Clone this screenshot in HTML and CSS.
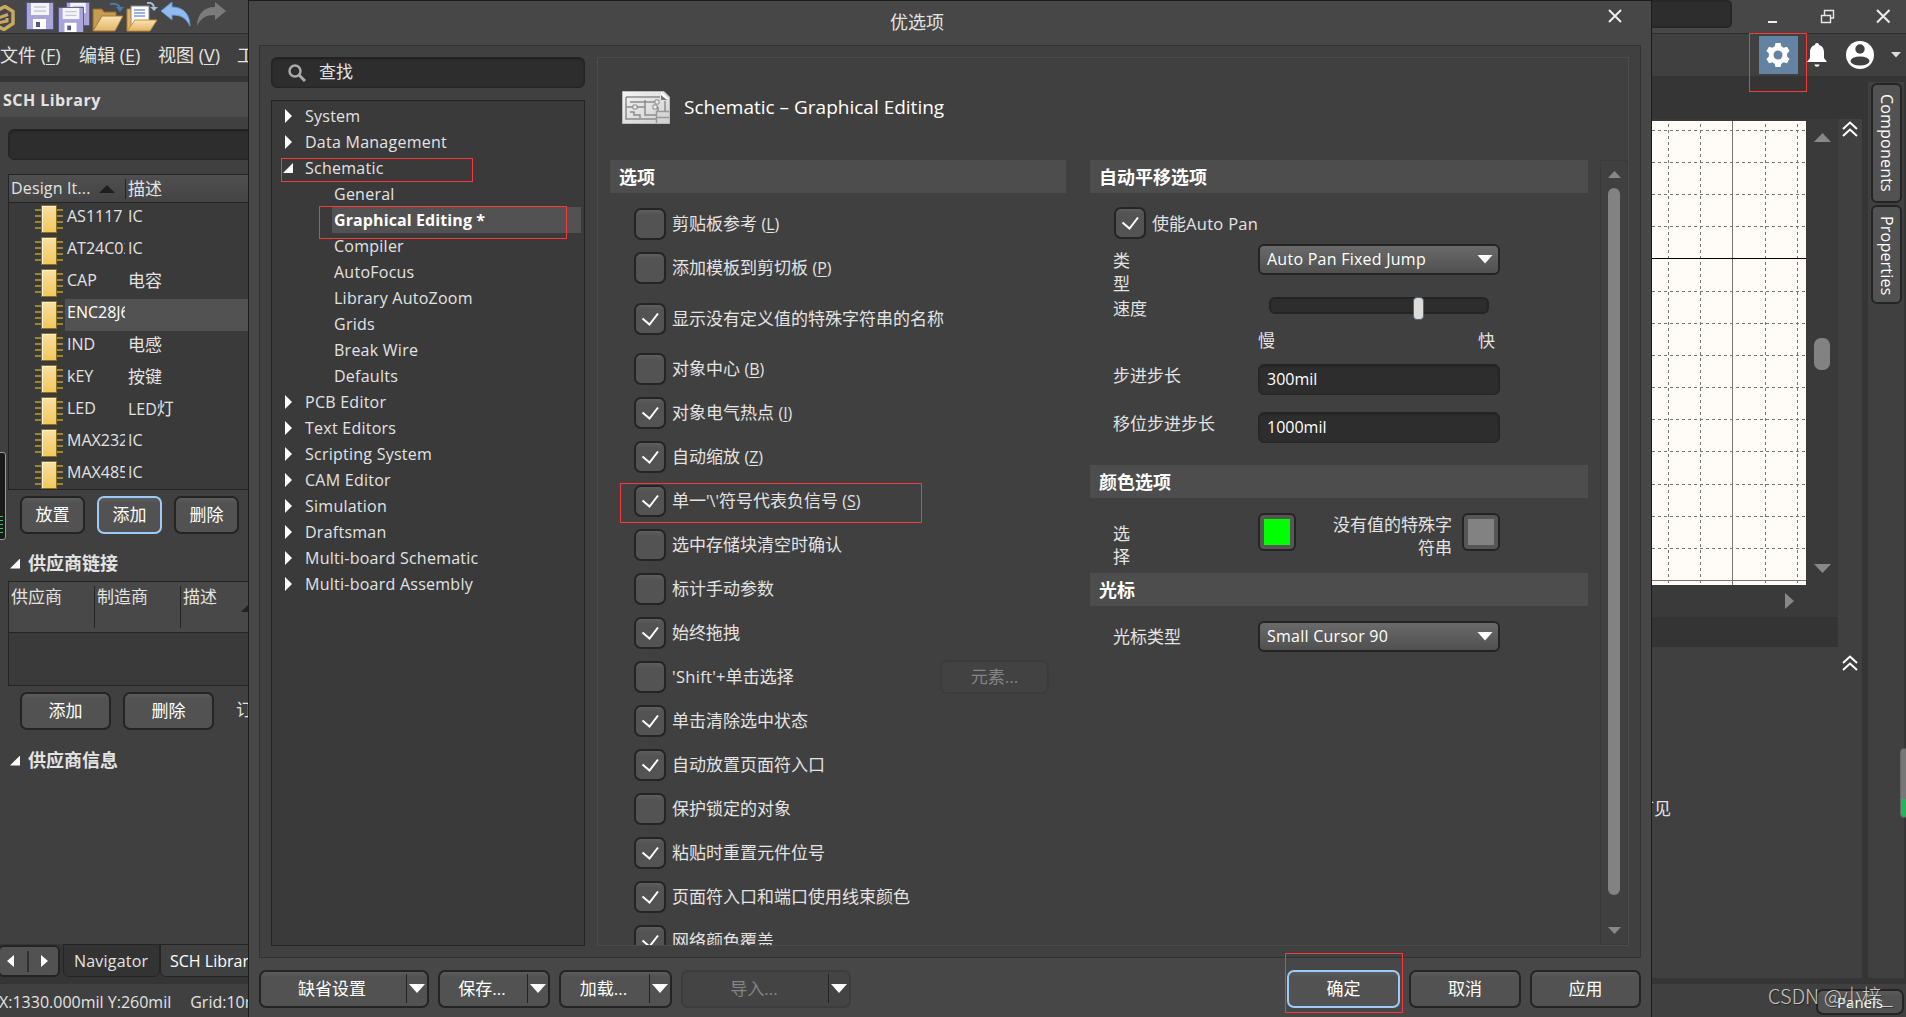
FILE: index.html
```html
<!DOCTYPE html>
<html lang="zh-CN">
<head>
    <meta charset="UTF-8">
    <meta name="viewport" content="width=device-width, initial-scale=1.0">
    <title>优选项</title>
    <link rel="stylesheet" href="styles.css">
</head>
<body>
    <!-- Shared icons -->
    <svg class="defs" width="0" height="0">
        <defs>
            <linearGradient id="chipFill" x1="0" y1="0" x2="0" y2="1">
                <stop offset="0" stop-color="#f8e0a0"/>
                <stop offset="1" stop-color="#f2c75c"/>
            </linearGradient>
            <linearGradient id="folderFill" x1="0" y1="0" x2="0" y2="1">
                <stop offset="0" stop-color="#fbe3b4"/>
                <stop offset="1" stop-color="#e3b566"/>
            </linearGradient>
            <linearGradient id="pageFill" x1="0" y1="0" x2="1" y2="1">
                <stop offset="0" stop-color="#f4f4f4"/>
                <stop offset="1" stop-color="#cfcfcf"/>
            </linearGradient>
            <symbol id="chip" viewBox="0 0 28 28">
                <path d="M0 5h28M0 11h28M0 17h28M0 23h28" stroke="#a08530" stroke-width="2"/>
                <rect x="6.5" y="0.5" width="15" height="27" fill="url(#chipFill)" stroke="#8a6f22"/>
                <path d="M7.5 27V1.500h13" fill="none" stroke="#fdf3d4"/>
            </symbol>
            <symbol id="check" viewBox="0 0 32 32">
                <path d="M8.500 15.500l7 6L24 10.500" fill="none" stroke="#fff" stroke-width="2"/>
            </symbol>
            <symbol id="floppy" viewBox="0 0 28 28">
                <rect x="0.500" y="0.500" width="27" height="27" fill="#a9a5d8" stroke="#55558c"/>
                <rect x="5" y="1" width="18" height="12" fill="#f4f4fb"/>
                <path d="M8 5h12M8 9h12" stroke="#c4c8d4" stroke-width="1.500"/>
                <rect x="7" y="17" width="13" height="10" fill="#fff"/>
                <rect x="10" y="20" width="4" height="5" fill="#55558c"/>
            </symbol>
            <symbol id="chevrons" viewBox="0 0 16 16">
                <path d="M1 8l7-6.500L15 8M1 15l7-6.500L15 15" fill="none" stroke="#fff" stroke-width="2"/>
            </symbol>
        </defs>
    </svg>

    <div class="screen">
        <!-- Left side: toolbar, menu, SCH Library panel -->
        <div class="left-side">
            <div class="toolbar">
                <svg class="logo" width="15" height="26" viewBox="0 0 15 26">
                    <path d="M-4 6L5 1.500l8 5v12l-9 6-8-4" fill="none" stroke="#c9a960" stroke-width="3.500"/>
                    <path d="M-2 13L8 9.500M-2 18l9-2v-3" fill="none" stroke="#c9a960" stroke-width="3"/>
                </svg>
                <svg width="28" height="28"><use href="#floppy"/></svg>
                <svg width="32" height="30" viewBox="0 0 32 30">
                    <use href="#floppy" x="8" y="0" width="24" height="24"/>
                    <use href="#floppy" x="0" y="5" width="26" height="26"/>
                </svg>
                <svg width="32" height="30" viewBox="0 0 32 30">
                    <path d="M1 29V7h9l2 3h12v5" fill="#c79b50" stroke="#8d6c30"/>
                    <path d="M1 29l9-15h21l-8 15z" fill="url(#folderFill)" stroke="#a47c3a"/>
                    <path d="M18 2c6-1 9 1 10 4" fill="none" stroke="#4a7ba5" stroke-width="2"/>
                    <path d="M24 5h8l-4 5z" fill="#4a7ba5"/>
                </svg>
                <svg width="32" height="30" viewBox="0 0 32 30">
                    <path d="M1 29V7h8v22" fill="#e9b158" stroke="#b17f2e"/>
                    <rect x="5" y="4" width="18" height="20" fill="#fff" stroke="#888"/>
                    <path d="M8 8h11M8 11h11M8 14h11" stroke="#7f9ad0" stroke-width="1.500"/>
                    <path d="M1 29l8-11h22l-7 11z" fill="url(#folderFill)" stroke="#c18a35"/>
                    <path d="M21 1c5-1 7 2 7 5" fill="none" stroke="#9fc0d8" stroke-width="2"/>
                    <path d="M24 5h8l-4 4z" fill="#9fc0d8"/>
                </svg>
                <svg class="history" width="31" height="26" viewBox="0 0 31 26">
                    <path d="M0 9L11 0v5c12 0 18 8 18 19C25 16 20 13 11 13v5z" fill="#8fbbf0" stroke="#6a94d6"/>
                </svg>
                <svg class="history" width="31" height="26" viewBox="0 0 31 26">
                    <path d="M30 9L19 0v5C7 5 1 13 1 24c4-8 9-11 18-11v5z" fill="#7b7b7b"/>
                </svg>
            </div>
            <div class="menu">
                <span>文件 (<u>F</u>)</span><span>编辑 (<u>E</u>)</span><span>视图 (<u>V</u>)</span><span>工具</span>
            </div>
            <div class="panel-title en">SCH Library</div>
            <div class="library">
                <div class="field lib-search"></div>
                <div class="table">
                    <div class="table-head">
                        <span class="en col-name">Design It...</span>
                        <svg width="16" height="9"><path d="M0 9L8 1l8 8z" fill="#1f1f1f"/></svg>
                        <span class="col-desc">描述</span>
                    </div>
                    <div class="lib-row"><svg width="28" height="28"><use href="#chip"/></svg><span class="name">AS1117</span><span>IC</span></div>
                    <div class="lib-row"><svg width="28" height="28"><use href="#chip"/></svg><span class="name">AT24C02</span><span>IC</span></div>
                    <div class="lib-row"><svg width="28" height="28"><use href="#chip"/></svg><span class="name">CAP</span><span class="cn">电容</span></div>
                    <div class="lib-row selected"><svg width="28" height="28"><use href="#chip"/></svg><span class="name">ENC28J60</span><span></span></div>
                    <div class="lib-row"><svg width="28" height="28"><use href="#chip"/></svg><span class="name">IND</span><span class="cn">电感</span></div>
                    <div class="lib-row"><svg width="28" height="28"><use href="#chip"/></svg><span class="name">kEY</span><span class="cn">按键</span></div>
                    <div class="lib-row"><svg width="28" height="28"><use href="#chip"/></svg><span class="name">LED</span><span class="cn"><em>LED</em>灯</span></div>
                    <div class="lib-row"><svg width="28" height="28"><use href="#chip"/></svg><span class="name">MAX232</span><span>IC</span></div>
                    <div class="lib-row"><svg width="28" height="28"><use href="#chip"/></svg><span class="name">MAX485</span><span>IC</span></div>
                </div>
                <div class="lib-buttons">
                    <button class="btn">放置</button>
                    <button class="btn focused">添加</button>
                    <button class="btn">删除</button>
                </div>
                <div class="section"><i class="tri-open"></i>供应商链接</div>
                <div class="suppliers">
                    <div class="sup-head">
                        <span>供应商</span><span>制造商</span><span>描述</span>
                        <i class="sort"></i>
                    </div>
                </div>
                <div class="sup-buttons">
                    <button class="btn">添加</button>
                    <button class="btn">删除</button>
                    <span>订购</span>
                </div>
                <div class="section info"><i class="tri-open"></i>供应商信息</div>
            </div>
            <div class="tabs">
                <div class="tab-nav">
                    <svg width="62" height="32" viewBox="0 0 62 32">
                        <path d="M16 10v12l-7-6zM43 10v12l7-6z" fill="#fff"/>
                        <path d="M30 6v21" stroke="#262626" stroke-width="1.500"/>
                    </svg>
                </div>
                <div class="tab dark en">Navigator</div>
                <div class="tab en">SCH Library</div>
            </div>
            <div class="status en"><span>X:1330.000mil Y:260mil</span><span>Grid:10mil</span></div>
            <div class="edge-widget"></div>
        </div>

        <!-- Preferences dialog -->
        <div class="dialog">
            <div class="dialog-title">
                <span>优选项</span>
                <svg width="14" height="14"><path d="M1 1l12 12M13 1L1 13" stroke="#eee" stroke-width="2"/></svg>
            </div>
            <div class="dialog-body">
                <div class="nav">
                    <div class="field nav-search">
                        <svg width="18" height="18" viewBox="0 0 18 18">
                            <circle cx="7" cy="7" r="5.500" fill="none" stroke="#aaa" stroke-width="2.500"/>
                            <path d="M11 11l6 6" stroke="#aaa" stroke-width="3"/>
                        </svg>
                        <span>查找</span>
                    </div>
                    <div class="tree en">
                        <div class="node"><i></i>System</div>
                        <div class="node"><i></i>Data Management</div>
                        <div class="node open"><i></i>Schematic</div>
                        <div class="leaf">General</div>
                        <div class="leaf selected">Graphical Editing *</div>
                        <div class="leaf">Compiler</div>
                        <div class="leaf">AutoFocus</div>
                        <div class="leaf">Library AutoZoom</div>
                        <div class="leaf">Grids</div>
                        <div class="leaf">Break Wire</div>
                        <div class="leaf">Defaults</div>
                        <div class="node"><i></i>PCB Editor</div>
                        <div class="node"><i></i>Text Editors</div>
                        <div class="node"><i></i>Scripting System</div>
                        <div class="node"><i></i>CAM Editor</div>
                        <div class="node"><i></i>Simulation</div>
                        <div class="node"><i></i>Draftsman</div>
                        <div class="node"><i></i>Multi-board Schematic</div>
                        <div class="node"><i></i>Multi-board Assembly</div>
                    </div>
                </div>

                <div class="page">
                    <div class="page-head">
                        <svg width="48" height="33" viewBox="0 0 48 33">
                            <path d="M0.500 0.500H42l5.500 5.500v26.500H0.500z" fill="url(#pageFill)" stroke="#bbb"/>
                            <path d="M4 6h34M4 6v22h30M43 10v10M8 11h27M15 16h8v-7M23 16v8h11M4 16h7M8 21h4v3h6v3M31 16h5M36 16v5" fill="none" stroke="#8c8c8c" stroke-width="1.500"/>
                            <path d="M11 14h4v4h-4zM33 9h4v4h-4zM31 14h4v4h-4z" fill="#eee" stroke="#8c8c8c"/>
                            <path d="M34 20.500h13M34 26.500h13M34.500 20v12" stroke="#999" stroke-width="1.500"/>
                            <path d="M39 1v7h8z" fill="#fff"/>
                            <path d="M39 4v5h6z" fill="#777"/>
                        </svg>
                        <span>Schematic – Graphical Editing</span>
                    </div>
                    <div class="columns">
                        <div class="col-left">
                            <h3>选项</h3>
                            <div class="checks">
                                <label class="check"><b></b><span>剪贴板参考 <em>(<u>L</u>)</em></span></label>
                                <label class="check"><b></b><span>添加模板到剪切板 <em>(<u>P</u>)</em></span></label>
                                <label class="check tall"><b><svg><use href="#check"/></svg></b><span>显示没有定义值的特殊字符串的名称</span></label>
                                <label class="check"><b></b><span>对象中心 <em>(<u>B</u>)</em></span></label>
                                <label class="check"><b><svg><use href="#check"/></svg></b><span>对象电气热点 <em>(<u>I</u>)</em></span></label>
                                <label class="check"><b><svg><use href="#check"/></svg></b><span>自动缩放 <em>(<u>Z</u>)</em></span></label>
                                <label class="check"><b><svg><use href="#check"/></svg></b><span>单一<em>'\'</em>符号代表负信号 <em>(<u>S</u>)</em></span></label>
                                <label class="check"><b></b><span>选中存储块清空时确认</span></label>
                                <label class="check"><b></b><span>标计手动参数</span></label>
                                <label class="check"><b><svg><use href="#check"/></svg></b><span>始终拖拽</span></label>
                                <label class="check"><b></b><span><em class="loose">'Shift'+</em>单击选择</span><button class="btn off">元素...</button></label>
                                <label class="check"><b><svg><use href="#check"/></svg></b><span>单击清除选中状态</span></label>
                                <label class="check"><b><svg><use href="#check"/></svg></b><span>自动放置页面符入口</span></label>
                                <label class="check"><b></b><span>保护锁定的对象</span></label>
                                <label class="check"><b><svg><use href="#check"/></svg></b><span>粘贴时重置元件位号</span></label>
                                <label class="check"><b><svg><use href="#check"/></svg></b><span>页面符入口和端口使用线束颜色</span></label>
                                <label class="check"><b><svg><use href="#check"/></svg></b><span>网络颜色覆盖</span></label>
                            </div>
                        </div>
                        <div class="col-right">
                            <h3>自动平移选项</h3>
                            <div class="form">
                                <label class="check"><b><svg><use href="#check"/></svg></b><span>使能<em class="loose">Auto Pan</em></span></label>
                                <div class="row type">
                                    <span class="narrow">类型</span>
                                    <div class="select en">Auto Pan Fixed Jump<i></i></div>
                                </div>
                                <div class="row speed">
                                    <span>速度</span>
                                    <div>
                                        <div class="slider"><i></i></div>
                                        <div class="scale"><span>慢</span><span>快</span></div>
                                    </div>
                                </div>
                                <div class="row step">
                                    <span>步进步长</span>
                                    <div class="field en">300mil</div>
                                </div>
                                <div class="row shift">
                                    <span>移位步进步长</span>
                                    <div class="field en">1000mil</div>
                                </div>
                            </div>
                            <h3>颜色选项</h3>
                            <div class="form">
                                <div class="row colors">
                                    <span class="narrow">选择</span>
                                    <div class="swatches">
                                        <div class="swatch green"><i></i></div>
                                        <p>没有值的特殊字符串</p>
                                        <div class="swatch"><i></i></div>
                                    </div>
                                </div>
                            </div>
                            <h3>光标</h3>
                            <div class="form">
                                <div class="row cursor">
                                    <span>光标类型</span>
                                    <div class="select en">Small Cursor 90<i></i></div>
                                </div>
                            </div>
                        </div>
                        <div class="scrollbar">
                            <svg width="13" height="7"><path d="M0 7l6.500-7L13 7z" fill="#888"/></svg>
                            <div class="thumb"></div>
                            <svg width="13" height="7"><path d="M0 0l6.500 7L13 0z" fill="#888"/></svg>
                        </div>
                    </div>
                </div>
            </div>
            <div class="footer">
                <button class="btn split wide"><span>缺省设置</span><i></i></button>
                <button class="btn split"><span>保存...</span><i></i></button>
                <button class="btn split load"><span>加载...</span><i></i></button>
                <button class="btn split wide off"><span>导入...</span><i></i></button>
                <button class="btn focused ok">确定</button>
                <button class="btn">取消</button>
                <button class="btn apply">应用</button>
            </div>
        </div>

        <!-- Right side: window buttons, sheet, docked tabs -->
        <div class="right-side">
            <div class="window-bar">
                <div class="global-search"></div>
                <svg width="126" height="16" viewBox="0 0 126 16">
                    <path d="M0 13h9" stroke="#eee" stroke-width="2"/>
                    <path d="M53.500 6.500h9v7h-9zM56.500 6V1.500h9V9H63" fill="none" stroke="#e8e8e8" stroke-width="1.400"/>
                    <path d="M109 1l12.500 12.500M121.500 1L109 13.500" stroke="#eee" stroke-width="2"/>
                </svg>
            </div>
            <div class="account-bar">
                <div class="gear">
                    <svg width="26" height="26" viewBox="0 0 26 26">
                        <path d="M10.500 1h5l.8 3.300 2.400 1.400 3.300-1 2.500 4.300-2.400 2.400v3.200l2.400 2.400-2.500 4.300-3.300-1-2.400 1.400-.8 3.300h-5l-.8-3.300-2.400-1.400-3.300 1L1.500 17l2.400-2.400v-3.200L1.500 9 4 4.700l3.300 1 2.400-1.400z" fill="#fff"/>
                        <circle cx="13" cy="13" r="4.500" fill="#6483a3"/>
                    </svg>
                </div>
                <svg class="bell" width="20" height="24" viewBox="0 0 20 24">
                    <path d="M10 0c1.300 0 2 .8 2 2 3.500 1 5 4 5 7v6l3 4H0l3-4V9c0-3 1.500-6 5-7 0-1.200.7-2 2-2zM7.500 21.500h5c0 3-5 3-5 0z" fill="#fff"/>
                </svg>
                <svg class="avatar" width="28" height="28" viewBox="0 0 28 28">
                    <circle cx="14" cy="14" r="14" fill="#fff"/>
                    <circle cx="14" cy="8" r="4.700" fill="#404040"/>
                    <ellipse cx="14" cy="20" rx="9.500" ry="4.500" fill="#404040"/>
                </svg>
                <svg width="10" height="6"><path d="M0 0h10L5 5.500z" fill="#ddd"/></svg>
            </div>
            <div class="work">
                <div class="docs">
                    <div class="sheet-row">
                        <svg class="sheet" width="154" height="464" viewBox="1652 121 154 464">
                            <g stroke="#7a7673" stroke-width="1" fill="none">
                                <path stroke-dasharray="3 3" d="M1668.500 124v461M1700.500 124v461M1765.500 124v461M1797.500 124v461"/>
                                <path stroke-dasharray="3 3" d="M1652 130.500h154M1652 162.500h154M1652 194.500h154M1652 226.500h154M1652 291.500h154M1652 323.500h154M1652 355.500h154M1652 387.500h154M1652 419.500h154M1652 451.500h154M1652 484.500h154M1652 516.500h154M1652 548.500h154"/>
                                <path d="M1732.500 121v464M1652 580.500h154"/>
                            </g>
                            <path d="M1652 258.500h154" stroke="#000"/>
                        </svg>
                        <div class="v-scroll">
                            <svg width="17" height="9"><path d="M0 9l8.500-9L17 9z" fill="#888"/></svg>
                            <div class="knob"></div>
                            <svg width="17" height="9"><path d="M0 0l8.500 9L17 0z" fill="#888"/></svg>
                        </div>
                    </div>
                    <div class="h-scroll"><svg width="9" height="16"><path d="M0 0l9 8-9 8z" fill="#888"/></svg></div>
                    <div class="doc-strip"></div>
                    <div class="message"><span>可见</span></div>
                </div>
                <div class="collapse">
                    <svg width="16" height="16"><use href="#chevrons"/></svg>
                    <svg width="16" height="16"><use href="#chevrons"/></svg>
                </div>
                <div class="dock">
                    <div class="dock-tab en">Components</div>
                    <div class="dock-tab props en">Properties</div>
                </div>
            </div>
            <div class="bottom-bar"><button class="btn en">Panels</button></div>
            <div class="meter"></div>
            <div class="watermark">CSDN @小梓_</div>
        </div>
    </div>

    <!-- Red callouts -->
    <div class="callout c-schematic"></div>
    <div class="callout c-graphical"></div>
    <div class="callout c-negation"></div>
    <div class="callout c-ok"></div>
    <div class="callout c-gear"></div>
</body>
</html>
```
FILE: styles.css
```css
:root {
    --bg: #404040;
    --bg-light: #474747;
    --bg-dark: #353535;
    --bg-tree: #3a3a3a;
    --head: #4d4d4d;
    --line: #242424;
    --text: #e3e3e3;
    --red: #f63a3a;
    --focus: #9ccbf7;
}

* {
    box-sizing: border-box;
    margin: 0;
    padding: 0;
}

body {
    width: 1906px;
    height: 1017px;
    overflow: hidden;
    position: relative;
    background: var(--bg);
    color: var(--text);
    font-family: "Open Sans", "Noto Sans CJK SC", sans-serif;
    font-size: 17px;
    line-height: 23px;
}

svg {
    display: block;
    flex: none;
}

.defs {
    position: absolute;
}

em {
    font-style: normal;
    font-size: 16px;
}

em.loose {
    font-size: 16.5px;
    letter-spacing: 0.3px;
}

u {
    text-underline-offset: 2px;
}

.en {
    font-size: 16px;
}

.screen {
    display: flex;
    height: 1017px;
}

/* Buttons and fields */
.btn {
    flex: none;
    height: 38px;
    padding-bottom: 1px;
    border: 2px solid var(--line);
    border-radius: 7px;
    background: linear-gradient(#5c5c5c, #525252 5px);
    color: #fff;
    font-family: inherit;
    font-size: 17px;
    line-height: 23px;
}

.btn.focused {
    border-color: var(--focus);
}

.btn.off {
    background: #444;
    border-color: #3c3c3c;
    color: #858585;
}

.field {
    height: 31px;
    border: 1px solid var(--line);
    border-radius: 6px;
    background: #2d2d2d;
    box-shadow: inset 0 1px 2px #202020;
}

/* Left side */
.left-side {
    position: relative;
    width: 248px;
    flex: none;
    display: flex;
    flex-direction: column;
    overflow: hidden;
    white-space: nowrap;
}

.toolbar {
    flex: none;
    display: flex;
    align-items: flex-start;
    gap: 2px;
    height: 34px;
    padding-top: 1px;
    background: var(--bg-light);
    border-bottom: 1px solid #2e2e2e;
}

.toolbar .logo {
    margin: 4px 9px 0 0;
}

.toolbar svg + svg {
    margin-top: 1px;
}

.toolbar .logo + svg {
    margin-right: 2px;
}

.toolbar svg.history {
    margin: 1px 1px 0 1px;
}

.menu {
    flex: none;
    display: flex;
    height: 42px;
    font-size: 18px;
    line-height: 42px;
}

.menu span {
    flex: none;
    width: 79px;
}

.panel-title {
    flex: none;
    height: 41px;
    padding: 1px 0 0 3px;
    border-top: 6px solid var(--bg-dark);
    background: var(--head);
    font-weight: bold;
    letter-spacing: 0.45px;
    line-height: 35px;
}

.library {
    height: 827px;
    flex: none;
    padding: 12px 0 0 8px;
}

.library .field,
.table,
.suppliers {
    width: 260px;
}

.table {
    height: 316px;
    margin-top: 14px;
    border: 1px solid var(--line);
    background: var(--bg-tree);
    overflow: hidden;
}

.table-head {
    display: flex;
    align-items: center;
    height: 28px;
    padding-left: 2px;
    background: linear-gradient(#4f4f4f, #444);
    border-bottom: 1px solid var(--line);
}

.col-name {
    width: 88px;
    letter-spacing: 0.15px;
}

.col-desc {
    margin-left: 10px;
    padding-left: 2px;
    border-left: 1px solid var(--line);
    line-height: 20px;
}

.lib-row {
    display: flex;
    height: 32px;
    padding: 2px 0 0 26px;
    font-size: 16px;
}

.lib-row span {
    width: 120px;
}

.lib-row .cn {
    font-size: 17px;
}

/* transparent border keeps a gap after a clipped name */
.lib-row .name {
    width: 63px;
    flex: none;
    margin-left: 2px;
    padding-left: 2px;
    border-right: 3px solid transparent;
    overflow: hidden;
}

.lib-row.selected span {
    margin-top: -2px;
    padding-top: 2px;
    background-color: #525252;
    color: #fff;
}

.lib-buttons,
.sup-buttons {
    display: flex;
    gap: 12px;
    padding: 6px 0 0 12px;
}

.lib-buttons .btn {
    width: 65px;
}

.section {
    display: flex;
    align-items: center;
    gap: 8px;
    margin-top: 18px;
    padding-left: 2px;
    font-size: 18px;
    font-weight: bold;
}

.section.info {
    margin-top: 19px;
}

.tri-open {
    width: 10px;
    height: 10px;
    background: #fff;
    clip-path: polygon(100% 0, 100% 100%, 0 100%);
}

.suppliers {
    height: 105px;
    margin-top: 6px;
    border: 1px solid var(--line);
    background: var(--bg-tree);
}

.sup-head {
    position: relative;
    display: flex;
    height: 51px;
    padding-top: 4px;
    background: #484848;
    border-bottom: 1px solid var(--line);
}

.sup-head span {
    width: 86px;
    height: 42px;
    padding-left: 2px;
    border-right: 1px solid var(--line);
    line-height: 21px;
}

.sort {
    position: absolute;
    left: 232px;
    top: 22px;
    width: 16px;
    height: 8px;
    background: #222;
    clip-path: polygon(50% 0, 100% 100%, 0 100%);
}

.sup-buttons .btn {
    width: 91px;
}

.sup-buttons span {
    padding: 6px 0 0 10px;
}

.tabs {
    flex: none;
    display: flex;
    height: 40px;
    background: var(--bg-dark);
    border-bottom: 7px solid var(--bg-dark);
}

.tab-nav {
    width: 62px;
    height: 32px;
    margin: 1px 1px 0 -2px;
    border: 2px solid var(--line);
    border-radius: 6px;
    background: #525252;
}

.tab-nav svg {
    margin: -2px;
}

.tab {
    flex: none;
    width: 120px;
    height: 33px;
    padding-left: 9px;
    border: 1px solid var(--line);
    border-radius: 0 0 6px 6px;
    background: var(--bg);
    color: #fff;
    line-height: 32px;
}

.tab.dark {
    width: 97px;
    margin-left: 2px;
    padding-left: 10px;
    background: #333;
    color: var(--text);
    letter-spacing: 0.2px;
}

.status {
    display: flex;
    gap: 19px;
    height: 33px;
    margin-left: -1px;
    line-height: 36px;
}

.edge-widget {
    position: absolute;
    left: -4px;
    top: 452px;
    width: 10px;
    height: 88px;
    border: 1px solid #999;
    border-radius: 3px;
    background: repeating-linear-gradient(#1a1a1a 0 3px, #35c85c 3px 4px) 0 60px / 6px 20px no-repeat, #1a1a1a;
}

/* Dialog */
.dialog {
    width: 1404px;
    flex: none;
    border: 1px solid #1c1c1c;
    border-bottom: none;
    background: var(--bg-light);
    padding: 0 10px;
}

.dialog-title {
    display: flex;
    justify-content: space-between;
    height: 44px;
    padding: 8px 19px 0 631px;
    font-size: 18px;
    line-height: 27px;
}

.dialog-body {
    display: flex;
    gap: 12px;
    height: 913px;
    padding: 11px;
    border: 1px solid #323232;
    background: var(--bg);
}

.nav {
    width: 314px;
    flex: none;
}

.nav-search {
    display: flex;
    align-items: center;
    gap: 13px;
    padding-left: 16px;
}

.nav-search span {
    padding-bottom: 2px;
}

.tree {
    height: 846px;
    margin-top: 12px;
    padding: 2px 3px;
    border: 1px solid var(--line);
    background: var(--bg-tree);
    letter-spacing: 0.25px;
}

.node,
.leaf {
    display: flex;
    align-items: center;
    height: 26px;
    padding-left: 10px;
}

.node i {
    width: 7px;
    height: 14px;
    margin-right: 13px;
    background: #fff;
    clip-path: polygon(0 0, 100% 50%, 0 100%);
}

.node.open i {
    width: 10px;
    height: 10px;
    margin: 0 12px 0 -2px;
    clip-path: polygon(100% 0, 100% 100%, 0 100%);
}

.leaf {
    margin-left: 57px;
    padding-left: 2px;
}

.leaf.selected {
    background: #525252;
    color: #fff;
    font-weight: bold;
    letter-spacing: 0.1px;
}

.page {
    width: 1032px;
    height: 889px;
    flex: none;
    border: 1px solid #4c4c4c;
    overflow: hidden;
}

.page-head {
    display: flex;
    align-items: center;
    gap: 14px;
    height: 102px;
    padding: 0 0 4px 24px;
    color: #fff;
    font-size: 19px;
}

.columns {
    display: flex;
    height: 785px;
    padding-left: 12px;
}

.col-left {
    width: 456px;
    margin-right: 24px;
    flex: none;
}

.col-right {
    width: 498px;
    margin-right: 12px;
    flex: none;
}

h3 {
    height: 33px;
    padding-left: 9px;
    background: var(--head);
    color: #fff;
    font-size: 18px;
    line-height: 34px;
}

.checks {
    padding: 9px 0 0 24px;
}

.check {
    display: flex;
    align-items: center;
    gap: 6px;
    height: 44px;
}

.check.tall {
    height: 57px;
}

.check b {
    width: 32px;
    height: 32px;
    flex: none;
    border: 2px solid var(--line);
    border-radius: 7px;
    background: linear-gradient(#5e5e5e, #535353 5px);
}

.check > span {
    padding-bottom: 1px;
}

.check b svg {
    width: 32px;
    height: 32px;
    margin: -2px;
}

.check .btn {
    width: 109px;
    height: 34px;
    margin: 0 17px 0 auto;
    background: #424242;
    line-height: 20px;
}

.form {
    padding-left: 24px;
}

.form .check {
    height: 51px;
    padding-top: 11px;
}

.form .check b {
    margin-top: -3px;
}

.row {
    display: grid;
    grid-template-columns: 144px 242px;
    align-items: start;
}

.row > span {
    margin-left: -1px;
}

.row > .narrow {
    width: 18px;
}

.type {
    height: 53px;
}

.type > span {
    margin-top: 5px;
}

.speed {
    height: 67px;
}

.step {
    height: 48px;
}

.shift {
    height: 53px;
}

.row .field {
    padding-left: 8px;
    color: #fff;
    line-height: 29px;
}

.select {
    display: flex;
    align-items: center;
    justify-content: space-between;
    height: 31px;
    padding: 0 5px 1px 7px;
    border: 2px solid var(--line);
    border-radius: 6px;
    background: linear-gradient(#6a6a6a, #505050);
    color: #fff;
    letter-spacing: 0.25px;
}

.select i,
.split i::after {
    width: 16px;
    height: 9px;
    background: #fff;
    clip-path: polygon(0 0, 100% 0, 50% 100%);
}

.slider {
    height: 17px;
    width: 220px;
    margin-left: 11px;
    padding-left: 142px;
    border: 2px solid var(--line);
    border-radius: 6px;
    background: #2d2d2d;
}

.slider i {
    display: block;
    width: 11px;
    height: 23px;
    margin-top: -2px;
    border: 1px solid #59636b;
    border-radius: 4px;
    background: #dcdcdc;
}

.scale {
    display: flex;
    justify-content: space-between;
    padding: 15px 5px 0 0;
}

.colors {
    height: 75px;
    padding-top: 15px;
}

.colors > span {
    margin-top: 9px;
}

.swatches {
    display: flex;
    align-items: flex-start;
}

.swatch {
    width: 38px;
    height: 38px;
    padding: 4px;
    border: 2px solid var(--line);
    border-radius: 6px;
    background: #565656;
}

.swatch i {
    display: block;
    height: 26px;
    background: #828282;
}

.swatch.green i {
    background: #00ff00;
}

.swatches p {
    width: 120px;
    margin: 0 10px 0 36px;
    text-align: right;
}

.cursor {
    padding-top: 15px;
}

.cursor > span {
    margin-top: 4px;
}

.scrollbar {
    width: 28px;
    display: flex;
    flex-direction: column;
    align-items: center;
    padding-top: 10px;
    border: 1px solid #3a3a3a;
}

.thumb {
    width: 12px;
    height: 707px;
    margin: 10px 0 32px;
    border-radius: 6px;
    background: #828282;
}

.footer {
    display: flex;
    gap: 9px;
    padding-top: 12px;
}

.footer .btn {
    width: 112px;
}

.footer .ok {
    width: 113px;
    margin-left: 427px;
}

.footer .apply {
    width: 111px;
}

.footer .split {
    display: flex;
    align-items: center;
}

.split span {
    flex: 1;
    padding-right: 3px;
}

.split i {
    display: flex;
    align-items: center;
    justify-content: center;
    width: 21px;
    height: 29px;
    border-left: 1px solid var(--line);
}

.split i::after {
    content: "";
    flex: none;
}

.footer .wide {
    width: 170px;
}

.footer .load {
    width: 113px;
}

/* Right side */
.right-side {
    position: relative;
    width: 254px;
    flex: none;
    overflow: hidden;
}

.window-bar {
    display: flex;
    height: 34px;
    background: var(--bg-light);
    border-bottom: 1px solid #2e2e2e;
}

.global-search {
    width: 80px;
    height: 28px;
    margin-right: 36px;
    border: 2px solid #262626;
    border-left: none;
    border-radius: 0 5px 5px 0;
    background: #2d2d2d;
}

.window-bar svg {
    margin-top: 9px;
}

.account-bar {
    display: flex;
    align-items: center;
    height: 42px;
    padding-left: 107px;
}

.gear {
    width: 39px;
    height: 38px;
    padding: 6px;
    background: #6483a3;
}

.bell {
    margin: 0 19px 0 9px;
}

.avatar {
    margin-right: 17px;
}

.work {
    display: flex;
    height: 902px;
    background: var(--bg-dark);
}

.docs {
    width: 186px;
    height: 859px;
    margin-top: 43px;
    background: var(--bg);
}

.sheet-row {
    display: flex;
    padding-top: 2px;
    background: #3a3a3a;
}

.sheet {
    background: #fffcf7;
}

.v-scroll {
    display: flex;
    flex-direction: column;
    align-items: center;
    width: 32px;
    padding-top: 12px;
}

.knob {
    width: 16px;
    height: 32px;
    margin: 196px 0 194px;
    border-radius: 7px;
    background: #828282;
}

.h-scroll {
    height: 32px;
    padding: 8px 0 0 133px;
    background: #3a3a3a;
}

.doc-strip {
    height: 30px;
    background: #343434;
}

/* only the tail of the message is visible next to the dialog */
.message {
    display: flex;
    justify-content: flex-end;
    width: 19px;
    margin-top: 150px;
    overflow: hidden;
    white-space: nowrap;
}

.collapse {
    display: flex;
    flex-direction: column;
    gap: 518px;
    width: 24px;
    height: 859px;
    margin-top: 43px;
    padding: 2px 0 0 4px;
    background: var(--bg);
}

.dock {
    width: 36px;
    margin: 6px 0 0 6px;
    padding: 1px 2px 0 3px;
    background: var(--bg);
}

.dock-tab {
    width: 31px;
    height: 120px;
    margin-bottom: 2px;
    padding-top: 9px;
    border: 2px solid var(--line);
    border-radius: 6px;
    background: #525252;
    color: #fff;
    letter-spacing: 0.2px;
    line-height: 26px;
    writing-mode: vertical-rl;
}

.dock-tab.props {
    height: 99px;
}

.bottom-bar {
    display: flex;
    justify-content: flex-end;
    height: 39px;
    padding: 5px 2px 0 0;
    border-top: 6px solid var(--bg-dark);
}

.bottom-bar .btn {
    width: 88px;
    height: 26px;
    font-size: 15px;
    line-height: 20px;
}

.meter {
    position: absolute;
    right: -2px;
    top: 748px;
    width: 8px;
    height: 70px;
    border: 1px solid #666;
    border-radius: 4px;
    background: linear-gradient(#777 50px, #27b35a 50px);
}

.watermark {
    position: absolute;
    left: 116px;
    top: 982px;
    color: rgba(225, 225, 225, 0.85);
    font-family: "Noto Sans CJK SC", sans-serif;
    font-size: 20px;
    font-weight: 300;
    line-height: 27px;
    white-space: nowrap;
    text-shadow: 1px 1px 1px rgba(0, 0, 0, 0.4);
}

/* Callouts drawn over the interface */
.callout {
    position: absolute;
    border: 1px solid var(--red);
}

.c-schematic {
    left: 281px;
    top: 158px;
    width: 192px;
    height: 24px;
}

.c-graphical {
    left: 319px;
    top: 206px;
    width: 248px;
    height: 33px;
}

.c-negation {
    left: 620px;
    top: 483px;
    width: 302px;
    height: 40px;
}

.c-ok {
    left: 1285px;
    top: 953px;
    width: 118px;
    height: 60px;
}

.c-gear {
    left: 1749px;
    top: 33px;
    width: 58px;
    height: 59px;
}
```
